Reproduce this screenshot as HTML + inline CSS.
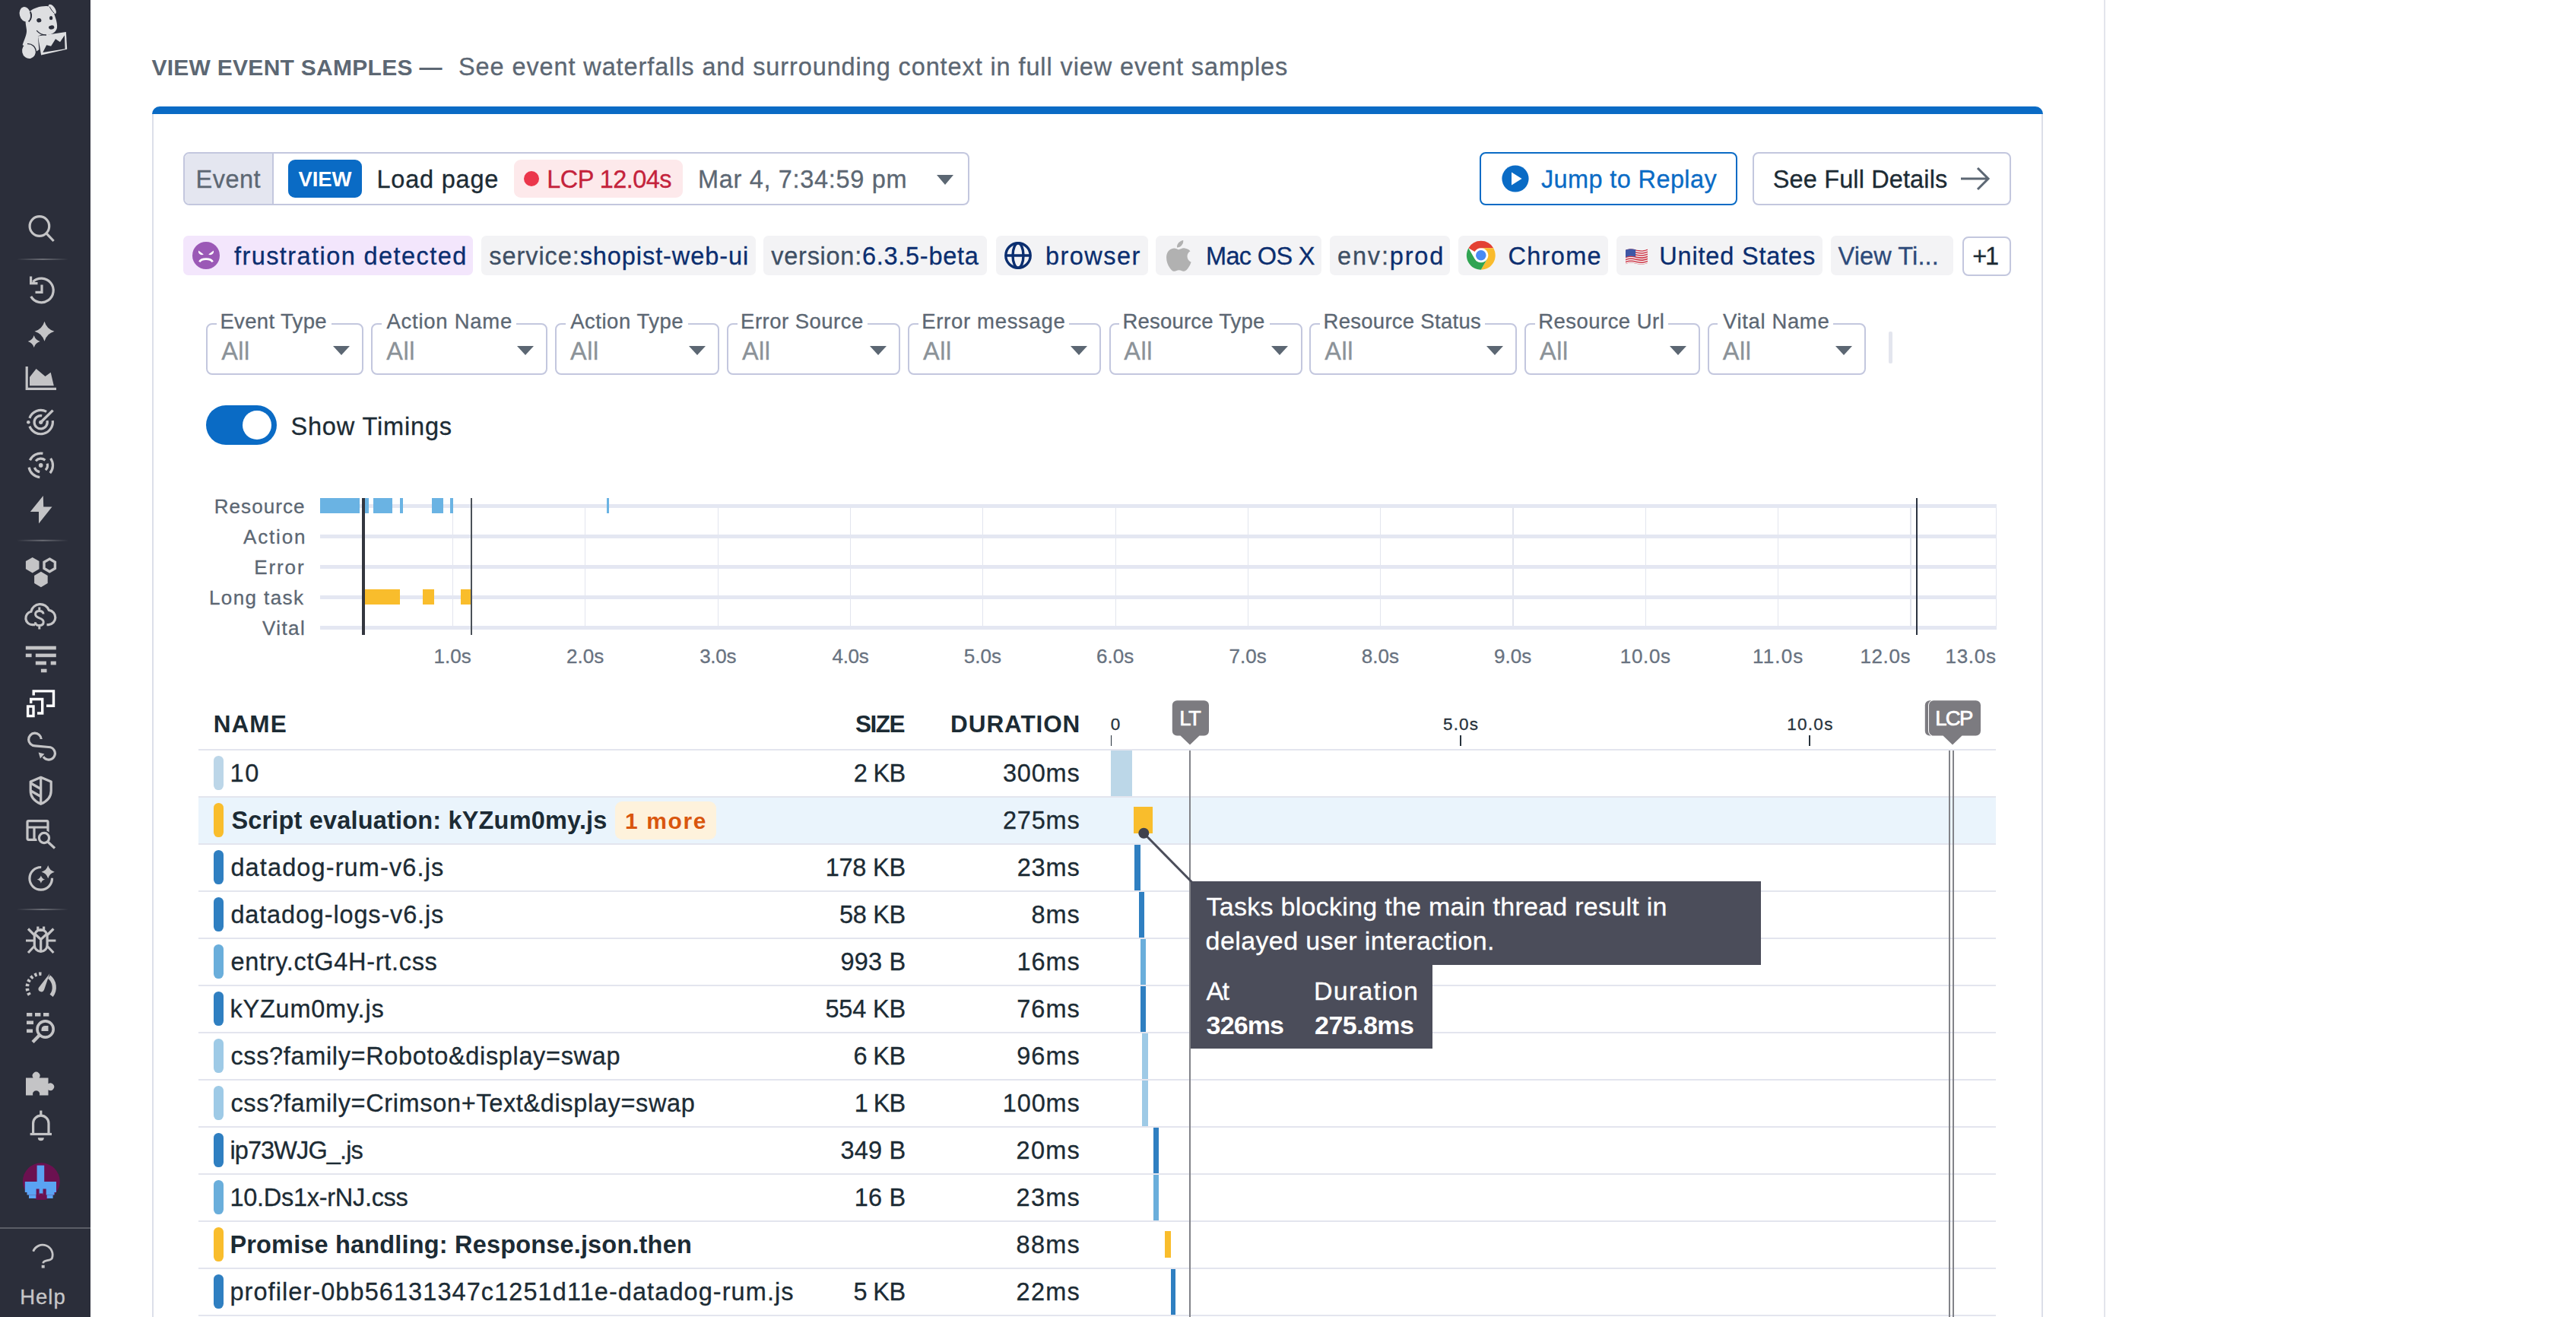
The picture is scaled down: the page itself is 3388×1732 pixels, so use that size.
<!DOCTYPE html><html lang="en"><head><meta charset="utf-8"><title>View Event Samples</title><style>*{box-sizing:border-box;margin:0;padding:0}
html,body{width:3388px;height:1732px;overflow:hidden;background:#fff}
body{font-family:"Liberation Sans",sans-serif;font-size:32.5px;color:#1c2b34;position:relative;letter-spacing:.9px}
.abs,.sb,.sb *,.card,.t,.box,.tag,.flt,.row,.row>*,.ln{position:absolute}
.t{white-space:nowrap;line-height:1;-webkit-text-stroke:.3px currentColor}
i{display:block;font-style:normal}
/* sidebar */
.sb{left:0;top:0;width:119px;height:1732px;background:#2b2e3a}
.sb svg{left:33px;width:42px;height:42px;overflow:visible}
.sb .dv{left:22px;width:66px;height:2px;background:linear-gradient(90deg,rgba(120,122,130,0),rgba(120,122,130,.9) 50%,rgba(120,122,130,0))}
.sb .help{left:0;width:120px;text-align:center;color:#c9c9cc;font-size:29px;letter-spacing:.3px;top:1690px;line-height:1}
/* card */
.vline{position:absolute;left:2767px;top:0;width:2px;height:1732px;background:#e3e5ec}
.card{left:199.7px;top:140px;width:2487.3px;height:1700px;border:2.5px solid #dcdfe9;border-top:none;border-radius:10px 10px 0 0}
.bluebar{position:absolute;left:199.7px;top:140px;width:2487.3px;height:10px;background:#0a6bc5;border-radius:10px 10px 0 0}
.box{border:2.5px solid #c3c7de;border-radius:8px;background:#fff}
.tag{top:310.4px;height:52px;border-radius:6.5px;background:#f3f3f5;color:#0c2d6b;line-height:52px;white-space:nowrap;padding-left:10px}
.tag .k{color:#3f4f63}
.flt{top:425px;height:67.5px;border:2.5px solid #c3c7de;border-radius:8px}
.flt .gap{position:absolute;left:11.5px;top:-3px;height:4px;background:#fff}
.flt .c{position:absolute;right:16.2px;top:27.8px;width:0;height:0;border-left:11.2px solid transparent;border-right:11.2px solid transparent;border-top:12.2px solid #5c6773}
/* overview chart */
.ol{right:2988px;font-size:27.5px;color:#5f6973;letter-spacing:.5px}
.trk{position:absolute;left:421.3px;width:2204.5px;height:5px;background:#e4e7f2}
.gl{position:absolute;top:665px;width:1.3px;height:160px;background:#e2e5ee}
.ax{font-size:25px;color:#6b7480;letter-spacing:.5px;transform:translateX(-50%)}
.rb{position:absolute;top:655px;height:20px;background:#6ab3e3}
.yb{position:absolute;top:775px;height:20px;background:#f9bd2c}
/* table */
.th{font-weight:700;font-size:30px;color:#1c2b34;letter-spacing:.6px}
.ln{left:261.3px;width:2363.7px;height:2.5px;background:#e3e5ee}
.pill{position:absolute;left:281.1px;width:12.8px;height:44.4px;border-radius:6.4px}
.tk{font-size:25px;color:#2b3540;letter-spacing:.3px;transform:translateX(-50%)}
</style></head><body>
<div class="sb"><svg width="119" height="1732" viewBox="0 0 119 1732" style="position:absolute;left:0;top:0;width:119px;height:1732px" fill="none" stroke="#c4c4c6" stroke-width="3.2">
<g stroke="none" fill="#dedfe1"><ellipse cx="33" cy="18.8" rx="7.2" ry="9.9" transform="rotate(-14 33 18.8)"/><ellipse cx="68.8" cy="12" rx="3.5" ry="7.3" transform="rotate(-36 68.8 12)"/><path d="M39.5 14.8C44 10.5 54 7.5 62 8C67 9 70.5 15 73.1 23.7C74.5 28 75.5 33 75 36.5C74.5 40 71 43.5 68.1 44.4C63 46.8 57 46 55.3 45.2L49.9 47.4L51.3 65.2L47.4 68.1L29.6 59.2C32 52 35.5 45 35 39.5C34.5 35 33.6 32 33.6 28.6Z"/><ellipse cx="38" cy="67.1" rx="8.9" ry="10" transform="rotate(-12 38 67.1)"/><path d="M49.9 47.4L86.9 42L88.2 64.7L54.1 72.6Z"/></g>
<g stroke="none" fill="#2b2e3a"><ellipse cx="51.3" cy="26.7" rx="3.1" ry="2.7" transform="rotate(-15 51.3 26.7)"/><ellipse cx="67.1" cy="23.7" rx="2.2" ry="2.6"/><ellipse cx="67.7" cy="36" rx="3.7" ry="2.6" transform="rotate(-8 67.7 36)"/><path d="M56.3 69.1L61.2 59.2L67.1 60.7L73 51.3L79 55.3L84.9 46.4L85.6 64.2Z"/></g>
<path d="M48.2 40.2C51 43.6 56 46.2 61 46" stroke="#2b2e3a" stroke-width="1.3"/>
<path d="M39.9 15.5C42 20 41.3 25.5 37.6 28.6" stroke="#2b2e3a" stroke-width="2"/>
<path d="M65.2 8.6C66.5 11.5 68.5 14.5 71.5 17.5" stroke="#2b2e3a" stroke-width="1"/>
<path d="M36 57.6C42 57.3 47 61 47.6 69" stroke="#2b2e3a" stroke-width="1.4"/>
<circle cx="51.9" cy="297.5" r="12.8"/><path d="M61.2 307.2L70.6 317"/>
<path d="M43.2 370.8A15.8 15.8 0 1 1 40.7 389.9"/><path d="M40.6 363.5V372.6H49.5"/><path d="M55 374.5V384.3H46.5"/>
<path d="M58.5 422.8Q61.4 432.9 71.5 435.8Q61.4 438.7 58.5 448.8Q55.6 438.7 45.5 435.8Q55.6 432.9 58.5 422.8Z" fill="#c4c4c6" stroke="none"/><path d="M44.7 441.1Q46.5 447.3 52.7 449.1Q46.5 450.9 44.7 457.1Q42.9 450.9 36.7 449.1Q42.9 447.3 44.7 441.1Z" fill="#c4c4c6" stroke="none"/>
<path d="M35.2 482V511.3H74"/><path d="M39 507.2V496L47.6 485L59.5 494.9L66.7 489.7L70.8 507.2Z" fill="#c4c4c6" stroke="none"/>
<path d="M38.9 549.9A15.8 15.8 0 0 1 61.1 541.3"/><path d="M69.3 553.1A15.8 15.8 0 0 1 38.9 560.7"/><circle cx="37.3" cy="555.3" r="2.3" fill="#c4c4c6" stroke="none"/>
<path d="M62.0 553.1A8.6 8.6 0 1 1 55.2 546.8"/><path d="M53.7 555.3L69.6 539.6" stroke-width="3.4"/><circle cx="53.7" cy="555.3" r="2.6" fill="#c4c4c6" stroke="none"/>
<path d="M39.4 605.2A15.8 15.8 0 0 1 56.4 596.3"/><path d="M66.6 602.8A15.8 15.8 0 0 1 65.8 622.1"/><path d="M52.3 627.6A15.8 15.8 0 0 1 38.1 614.6"/>
<path d="M47.0 606.2A8.8 8.8 0 0 1 59.4 605.2"/><path d="M62.2 609.6A8.8 8.8 0 0 1 59.9 618.1"/><path d="M52.2 620.6A8.8 8.8 0 0 1 45.4 614.9"/><circle cx="53.7" cy="611.9" r="2.8" fill="#c4c4c6" stroke="none"/>
<path d="M56.8 652L39.8 672.9H51V688.5L68.5 666.5H57.2Z" fill="#c4c4c6" stroke="none" stroke-linejoin="round"/>
<polygon points="42.7,733.0 51.5,738.1 51.5,748.3 42.7,753.4 33.9,748.3 33.9,738.1" fill="#c4c4c6" stroke="none"/><polygon points="53.9,751.8 62.7,756.9 62.7,767.1 53.9,772.2 45.1,767.1 45.1,756.9" fill="#c4c4c6" stroke="none"/><polygon points="65.2,735.1 72.4,739.2 72.4,747.5 65.2,751.7 58.0,747.5 58.0,739.2" stroke-width="3.4"/>
<path d="M46 821.7H43A8.8 8.8 0 0 1 40.8 804.3A12.3 12.3 0 0 1 64.3 802.4A9.7 9.7 0 0 1 63.8 821.7H61.5"/>
<path d="M57 807.6C57 804.6 54.8 803.5 51.8 803.5C48.5 803.5 46.6 805.3 46.6 807.8C46.6 810.8 49 811.8 51.8 812.8C54.8 813.8 57.2 815 57.2 818C57.2 820.8 55 822.5 51.8 822.5C48.6 822.5 46.4 821 46.4 818.2M51.8 798.4V803.5M51.8 822.5V827.6" stroke-width="3"/>
<rect x="33.8" y="849.7" width="40.0" height="4.7" fill="#c4c4c6" stroke="none"/>
<rect x="33.8" y="859.6" width="7.8" height="4.6" fill="#c4c4c6" stroke="none"/>
<rect x="46.8" y="859.6" width="27.0" height="4.6" fill="#c4c4c6" stroke="none"/>
<rect x="46.8" y="869.6" width="14.1" height="4.8" fill="#c4c4c6" stroke="none"/>
<rect x="66.7" y="869.6" width="7.1" height="4.8" fill="#c4c4c6" stroke="none"/>
<rect x="53.9" y="879.7" width="7.6" height="4.6" fill="#c4c4c6" stroke="none"/>
<g stroke="#fff" stroke-width="3.4"><path d="M44.2 914.5V908.9H70.5V928.2H61"/><path d="M40.7 925V919.5H55.7V938H49"/><rect x="36.6" y="929" width="7.4" height="12.6"/></g>
<path d="M54.2 972A8.3 8.3 0 1 0 45.9 980.8L63.9 982.5A8.3 8.3 0 1 1 57 995.2"/>
<path d="M50.6 989.6L58.4 991.6L53 997.4Z" fill="#c4c4c6" stroke="none"/>
<path d="M53.7 1022.3L67.2 1028V1040C67.2 1048.5 61.5 1054 53.7 1057.3C45.9 1054 40.2 1048.5 40.2 1040V1028Z" stroke-linejoin="round"/><path d="M53.7 1022.3V1057"/><path d="M40.5 1030L53.7 1037.5M40.5 1040L53.7 1047.5"/>
<rect x="36" y="1079.7" width="27" height="24.6" rx="1.5"/><path d="M36 1088H63M45 1088V1104"/><circle cx="58" cy="1102" r="6.6" fill="#2b2e3a" stroke="#2b2e3a" stroke-width="7"/><circle cx="58" cy="1102" r="6.6"/><path d="M62.8 1107L72 1115.5"/>
<path d="M54.2 1140.5A14.8 14.8 0 1 0 68.5 1154.8"/><path d="M63.2 1138.1Q65.1 1144.8 71.8 1146.7Q65.1 1148.6 63.2 1155.3Q61.3 1148.6 54.6 1146.7Q61.3 1144.8 63.2 1138.1Z" fill="#c4c4c6" stroke="none"/><path d="M53.9 1151.4Q55.0 1155.5 59.1 1156.6Q55.0 1157.7 53.9 1161.8Q52.8 1157.7 48.7 1156.6Q52.8 1155.5 53.9 1151.4Z" fill="#c4c4c6" stroke="none"/>
<path d="M45.3 1231A8.4 8.4 0 0 1 62.1 1231V1243A8.4 8.4 0 0 1 45.3 1243Z"/><path d="M46.2 1228.5L53.7 1235.5L61.2 1228.5M53.7 1235.5V1251"/><path d="M49.8 1218.5V1223.5H57.6V1218.5"/><path d="M45 1229.5L37 1221.5M62.4 1229.5L70.4 1221.5M45 1237H34M62.4 1237H73.4M45 1244.5L37 1253M62.4 1244.5L70.4 1253"/>
<path d="M38.9 1308.5A17.8 17.8 0 0 1 55.6 1280.8" stroke-width="4.6" stroke-dasharray="3.3 2.7"/><path d="M64.5 1284.6A17.6 17.6 0 0 1 67.6 1309.3" stroke-width="5.2"/>
<path d="M65.4 1280.3L58 1301.8A3.8 3.8 0 0 1 50.8 1299Z" fill="#c4c4c6" stroke="none"/>
<rect x="35" y="1332" width="7.4" height="4.6" fill="#c4c4c6" stroke="none"/>
<rect x="46" y="1332" width="7.4" height="4.6" fill="#c4c4c6" stroke="none"/>
<rect x="57" y="1332" width="7.4" height="4.6" fill="#c4c4c6" stroke="none"/>
<rect x="35" y="1342.5" width="9" height="4.6" fill="#c4c4c6" stroke="none"/>
<rect x="35" y="1353.5" width="8" height="4.6" fill="#c4c4c6" stroke="none"/>
<circle cx="59.6" cy="1353.5" r="10.6" stroke-width="3.6"/><path d="M51.8 1361.5L43 1370.5" stroke-width="4.4"/>
<path d="M54.5 1356V1353.5A5 5 0 0 1 59.5 1349H63.5V1356Z" fill="#c4c4c6" stroke="none"/>
<path d="M34 1417.5H43.6A4.9 4.9 0 1 1 51.6 1417.5H63.5V1425.2A4.9 4.9 0 1 1 63.5 1433.3V1440.5H52A4.7 4.7 0 1 0 43.2 1440.5H34Z" fill="#c4c4c6" stroke="none"/>
<path d="M43.6 1490.5V1477.3A10.2 10.2 0 0 1 64 1477.3V1490.5"/><path d="M39.6 1491.5H68"/><path d="M53.8 1460.5V1467"/>
<path d="M49.8 1496.3H57.8A4 4 0 0 1 49.8 1496.3Z" fill="#c4c4c6" stroke="none"/>
<circle cx="54.3" cy="1553.7" r="24.4" fill="#6b1150" stroke="none"/>
<rect x="48.6" y="1532.6" width="9.6" height="35.4" fill="#5aa3f3" stroke="none"/>
<rect x="32.8" y="1554" width="41.2" height="14.0" fill="#5aa3f3" stroke="none"/>
<rect x="35.5" y="1568" width="36.0" height="3.5" fill="#5aa3f3" stroke="none"/>
<rect x="38" y="1571.5" width="9.6" height="4.5" fill="#5aa3f3" stroke="none"/>
<rect x="61.7" y="1571.5" width="7.9" height="4.5" fill="#5aa3f3" stroke="none"/>
<rect x="50" y="1568" width="7.0" height="1.5" fill="#5aa3f3" stroke="none"/>
<rect x="47.6" y="1563.5" width="4" height="14" fill="#6b1150" stroke="none"/><rect x="56.5" y="1563.5" width="4.2" height="14" fill="#6b1150" stroke="none"/><rect x="51.6" y="1569.5" width="5" height="8" fill="#6b1150" stroke="none"/>
<rect x="22" y="340" width="68" height="2" fill="url(#dg)" stroke="none"/>
<rect x="22" y="709.8" width="68" height="2" fill="url(#dg)" stroke="none"/>
<rect x="22" y="1195" width="68" height="2" fill="url(#dg)" stroke="none"/>
<defs><linearGradient id="dg" x1="0" x2="1" y1="0" y2="0"><stop offset="0" stop-color="#6a6c74" stop-opacity="0"/><stop offset=".5" stop-color="#6a6c74" stop-opacity="1"/><stop offset="1" stop-color="#6a6c74" stop-opacity="0"/></linearGradient></defs>
<rect x="0" y="1614" width="119" height="2" fill="#5b5d66" stroke="none"/>
<path d="M43.7 1645.7A13 13 0 1 1 68.3 1655C65.5 1659 57 1656.5 56.7 1661.3" stroke-width="2.8"/><rect x="54.7" y="1663.8" width="4" height="3.8" fill="#c4c4c6" stroke="none"/>
</svg>
</div>
<div class="vline"></div>
<div class="t " style="top:1691.8px;font-size:27.5px;left:56.8px;transform:translateX(-50%);color:#c6c6c8;letter-spacing:1.012px;margin-left:-0.35px;">Help</div>
<div class="t " style="top:73.7px;font-size:30px;left:199.4px;color:#5c6773;font-weight:700;-webkit-text-stroke:0;letter-spacing:0.278px;margin-left:0.00px;">VIEW EVENT SAMPLES —</div>
<div class="t " style="top:71.9px;font-size:32.5px;left:604px;color:#5c6773;letter-spacing:0.890px;margin-left:-1.00px;">See event waterfalls and surrounding context in full view event samples</div>
<div class="card"></div><div class="bluebar"></div>
<div class="box abs" style="left:241px;top:200px;width:1034px;height:70px;overflow:hidden"><i class="abs" style="left:0;top:0;width:117.2px;height:70px;background:#e4e6f0;border-right:2.5px solid #c3c7de"></i></div>
<div class="t " style="top:219.6px;font-size:32.5px;left:259.5px;color:#5c6773;letter-spacing:0.481px;margin-left:-2.00px;">Event</div>
<div class="abs" style="left:379px;top:210px;width:97px;height:50px;border-radius:9px;background:#0a6bc5"></div>
<div class="t " style="top:222.0px;font-size:27.5px;left:392.5px;color:#fff;font-weight:700;-webkit-text-stroke:0;letter-spacing:-0.108px;margin-left:0.00px;">VIEW</div>
<div class="t " style="top:219.6px;font-size:32.5px;left:497.5px;color:#1c2b34;letter-spacing:0.774px;margin-left:-2.00px;">Load page</div>
<div class="abs" style="left:676px;top:210px;width:222px;height:50px;border-radius:9px;background:#fde9eb"></div>
<div class="abs" style="left:689px;top:225.3px;width:20px;height:20px;border-radius:50%;background:#eb364b"></div>
<div class="t " style="top:219.6px;font-size:32.5px;left:721.25px;color:#c4223b;letter-spacing:-0.565px;margin-left:-2.00px;">LCP 12.04s</div>
<div class="t " style="top:219.6px;font-size:32.5px;left:920px;color:#5c6773;letter-spacing:0.677px;margin-left:-2.00px;">Mar 4, 7:34:59 pm</div>
<div class="abs" style="left:1232px;top:229.5px;width:0;height:0;border-left:11.5px solid transparent;border-right:11.5px solid transparent;border-top:13px solid #5c6773"></div>
<div class="box abs" style="left:1946px;top:200px;width:339px;height:70px;border-color:#0a6bc5"></div>
<svg class="abs" style="left:1975px;top:217px" width="36" height="36" viewBox="0 0 36 36"><circle cx="18" cy="18" r="17.6" fill="#0a6bc5"/><path d="M13 9.5L26.5 18L13 26.5Z" fill="#fff"/></svg>
<div class="t " style="top:220.2px;font-size:32.5px;left:2026.9px;color:#0a6bc5;letter-spacing:0.381px;margin-left:0.00px;">Jump to Replay</div>
<div class="box abs" style="left:2305px;top:200px;width:340px;height:70px"></div>
<div class="t " style="top:220.2px;font-size:32.5px;left:2332.8px;color:#1c2b34;letter-spacing:0.124px;margin-left:-1.00px;">See Full Details</div>
<svg class="abs" style="left:2578px;top:218px" width="40" height="34" viewBox="0 0 40 34" fill="none" stroke="#5c6773" stroke-width="3"><path d="M1 17H37M23 3L37 17L23 31"/></svg>
<div class="tag" style="left:241.25px;width:381.2px;background:#f3e6fc"></div>
<svg class="abs" style="left:253px;top:317.8px" width="36" height="36" viewBox="0 0 36 36"><circle cx="18" cy="18" r="18" fill="#9b59b6"/><path d="M8 11.5L14.8 16.6C13 17.7 9.5 17.4 8 14ZM28 11.5L21.2 16.6C23 17.7 26.5 17.4 28 14Z" fill="#fff"/><path d="M9.3 26.3C12 21.4 24 21.4 26.7 26.3" stroke="#fff" stroke-width="2.7" fill="none"/></svg>
<div class="t " style="top:320.7px;font-size:32.5px;left:308px;color:#0b2e6f;letter-spacing:1.424px;margin-left:0.00px;">frustration detected</div>
<div class="tag" style="left:633.25px;width:360.4px;"></div>
<div class="t " style="top:320.7px;font-size:32.5px;left:643.3px;color:#0b2e6f;letter-spacing:0.924px;margin-left:0.00px;"><span style="color:#3e4f64">service:</span>shopist-web-ui</div>
<div class="tag" style="left:1004.3px;width:294.0px;"></div>
<div class="t " style="top:320.7px;font-size:32.5px;left:1014.3px;color:#0b2e6f;letter-spacing:0.730px;margin-left:0.00px;"><span style="color:#3e4f64">version:</span>6.3.5-beta</div>
<div class="tag" style="left:1309.5px;width:200.0px;"></div>
<svg class="abs" style="left:1321px;top:318.2px" width="36" height="36" viewBox="0 0 36 36" fill="none" stroke="#0b2e6f" stroke-width="3.4"><circle cx="18" cy="18" r="16.2"/><ellipse cx="18" cy="18" rx="7" ry="16.2"/><path d="M1.8 18H34.2"/></svg>
<div class="t " style="top:320.7px;font-size:32.5px;left:1377px;color:#0b2e6f;letter-spacing:1.455px;margin-left:-2.00px;">browser</div>
<div class="tag" style="left:1520px;width:218.2px;"></div>
<svg class="abs" style="left:1533px;top:315.5px" width="34" height="41" viewBox="0 0 34 41"><path fill="#b1b1b1" d="M23.2 0C23.5 2.6 22.5 5 21 6.7C19.4 8.5 17.2 9.7 15 9.5C14.7 7 15.9 4.6 17.3 3.1C18.9 1.3 21.4 0.2 23.2 0ZM32.5 14.2C29.8 15.9 28.4 18.3 28.5 21.3C28.6 24.9 30.6 27.4 33.6 28.7C32.8 31.2 31.6 33.6 30 35.9C28.3 38.3 26.6 40.6 24 40.7C21.5 40.8 20.6 39.2 17.7 39.2C14.8 39.2 13.8 40.6 11.4 40.8C8.9 40.9 7 38.3 5.3 35.9C1.8 30.9 -0.8 21.8 2.8 15.6C4.5 12.5 7.7 10.6 11.1 10.5C13.6 10.5 15.9 12.2 17.4 12.2C18.9 12.2 21.8 10.1 24.8 10.4C26.1 10.5 29.7 10.9 32.5 14.2Z"/></svg>
<div class="t " style="top:320.7px;font-size:32.5px;left:1588px;color:#0b2e6f;letter-spacing:-0.666px;margin-left:-2.00px;">Mac OS X</div>
<div class="tag" style="left:1749.25px;width:158.2px;"></div>
<div class="t " style="top:320.7px;font-size:32.5px;left:1760px;color:#0b2e6f;letter-spacing:1.835px;margin-left:-1.00px;"><span style="color:#3e4f64">env:</span>prod</div>
<div class="tag" style="left:1918.3px;width:197.1px;"></div>
<svg class="abs" style="left:1928.1px;top:316px" width="39.6" height="39.6" viewBox="0 0 48 48"><circle cx="24" cy="24" r="23" fill="#fff"/><path d="M24 1A23 23 0 0 1 43.9 12.5H24A11.5 11.5 0 0 0 14 18.3L4.1 12.5A23 23 0 0 1 24 1Z" fill="#e34133"/><path d="M43.9 12.5A23 23 0 0 1 24 47L33.96 29.75A11.5 11.5 0 0 0 24 12.5Z" fill="#f9bb2d"/><path d="M4.1 12.5L14.04 29.75A11.5 11.5 0 0 0 33.96 29.75L24 47A23 23 0 0 1 4.1 12.5Z" fill="#30a452"/><circle cx="24" cy="24" r="10.3" fill="#fff"/><circle cx="24" cy="24" r="8.2" fill="#4a8af4"/></svg>
<div class="t " style="top:320.7px;font-size:32.5px;left:1984.4px;color:#0b2e6f;letter-spacing:1.337px;margin-left:-1.00px;">Chrome</div>
<div class="tag" style="left:2126px;width:271.0px;"></div>
<svg class="abs" style="left:2137.8px;top:326.2px" width="29.5" height="22.5" viewBox="0 0 29.5 22.5"><defs><clipPath id="fc"><path d="M0 2.6C5 0.6 9 1 14.7 2.4C20 3.7 24.5 3.4 29.5 1.2V19.8C24.5 22 20 22.3 14.7 21C9 19.6 5 19.2 0 21.2Z"/></clipPath></defs><g clip-path="url(#fc)"><rect width="29.5" height="22.5" fill="#f2f2f2"/><path d="M0 2.60C5 0.60 9 1.00 14.7 2.40C20 3.70 24.5 3.40 29.5 1.20V2.80C24.5 5.00 20 5.30 14.7 4.00C9 2.60 5 2.20 0 4.20Z" fill="#d0394a"/><path d="M0 5.65C5 3.65 9 4.05 14.7 5.45C20 6.75 24.5 6.45 29.5 4.25V5.85C24.5 8.05 20 8.35 14.7 7.05C9 5.65 5 5.25 0 7.25Z" fill="#d0394a"/><path d="M0 8.70C5 6.70 9 7.10 14.7 8.50C20 9.80 24.5 9.50 29.5 7.30V8.90C24.5 11.10 20 11.40 14.7 10.10C9 8.70 5 8.30 0 10.30Z" fill="#d0394a"/><path d="M0 11.75C5 9.75 9 10.15 14.7 11.55C20 12.85 24.5 12.55 29.5 10.35V11.95C24.5 14.15 20 14.45 14.7 13.15C9 11.75 5 11.35 0 13.35Z" fill="#d0394a"/><path d="M0 14.80C5 12.80 9 13.20 14.7 14.60C20 15.90 24.5 15.60 29.5 13.40V15.00C24.5 17.20 20 17.50 14.7 16.20C9 14.80 5 14.40 0 16.40Z" fill="#d0394a"/><path d="M0 17.85C5 15.85 9 16.25 14.7 17.65C20 18.95 24.5 18.65 29.5 16.45V18.05C24.5 20.25 20 20.55 14.7 19.25C9 17.85 5 17.45 0 19.45Z" fill="#d0394a"/><path d="M0 20.90C5 18.90 9 19.30 14.7 20.70C20 22.00 24.5 21.70 29.5 19.50V21.10C24.5 23.30 20 23.60 14.7 22.30C9 20.90 5 20.50 0 22.50Z" fill="#d0394a"/><path d="M0 2.6C5 0.6 9 1 13.2 2V11.6C9 10.6 5 10.4 0 12.4Z" fill="#3f57a5"/></g></svg>
<div class="t " style="top:320.7px;font-size:32.5px;left:2184.3px;color:#0b2e6f;letter-spacing:0.820px;margin-left:-2.00px;">United States</div>
<div class="tag" style="left:2408px;width:161.2px;"></div>
<div class="t " style="top:320.7px;font-size:32.5px;left:2417.5px;color:#2d4a7a;letter-spacing:0.110px;margin-left:0.00px;">View Ti...</div>
<div class="box abs" style="left:2580.5px;top:310.5px;width:64px;height:52px"></div>
<div class="t " style="top:320.7px;font-size:32.5px;left:2611.6px;transform:translateX(-50%);color:#1c2b34;letter-spacing:-2.179px;margin-left:-1.05px;">+1</div>
<div class="flt" style="left:271.3px;width:206.9px"><i class="gap" style="width:150.9px"></i><i class="c"></i></div>
<div class="t " style="top:409.1px;font-size:27.5px;left:291.40000000000003px;color:#5c6773;letter-spacing:0.346px;margin-left:-2.00px;">Event Type</div>
<div class="t " style="top:446.0px;font-size:32.5px;left:291.20000000000005px;color:#8b9298;letter-spacing:0.501px;margin-left:0.00px;">All</div>
<div class="flt" style="left:488.4px;width:232.0px"><i class="gap" style="width:176.9px"></i><i class="c"></i></div>
<div class="t " style="top:409.1px;font-size:27.5px;left:508.5px;color:#5c6773;letter-spacing:0.727px;margin-left:0.00px;">Action Name</div>
<div class="t " style="top:446.0px;font-size:32.5px;left:508.3px;color:#8b9298;letter-spacing:0.501px;margin-left:0.00px;">All</div>
<div class="flt" style="left:730.1px;width:216.3px"><i class="gap" style="width:161.1px"></i><i class="c"></i></div>
<div class="t " style="top:409.1px;font-size:27.5px;left:750.1999999999999px;color:#5c6773;letter-spacing:0.520px;margin-left:0.00px;">Action Type</div>
<div class="t " style="top:446.0px;font-size:32.5px;left:750.0px;color:#8b9298;letter-spacing:0.501px;margin-left:0.00px;">All</div>
<div class="flt" style="left:956.0px;width:228.4px"><i class="gap" style="width:171.4px"></i><i class="c"></i></div>
<div class="t " style="top:409.1px;font-size:27.5px;left:976.0999999999999px;color:#5c6773;letter-spacing:0.483px;margin-left:-2.00px;">Error Source</div>
<div class="t " style="top:446.0px;font-size:32.5px;left:975.9px;color:#8b9298;letter-spacing:0.501px;margin-left:0.00px;">All</div>
<div class="flt" style="left:1194.1px;width:254.0px"><i class="gap" style="width:198.8px"></i><i class="c"></i></div>
<div class="t " style="top:409.1px;font-size:27.5px;left:1214.2px;color:#5c6773;letter-spacing:0.688px;margin-left:-2.00px;">Error message</div>
<div class="t " style="top:446.0px;font-size:32.5px;left:1214.0px;color:#8b9298;letter-spacing:0.501px;margin-left:0.00px;">All</div>
<div class="flt" style="left:1458.5px;width:254.0px"><i class="gap" style="width:197.5px"></i><i class="c"></i></div>
<div class="t " style="top:409.1px;font-size:27.5px;left:1478.55px;color:#5c6773;letter-spacing:0.195px;margin-left:-2.00px;">Resource Type</div>
<div class="t " style="top:446.0px;font-size:32.5px;left:1478.35px;color:#8b9298;letter-spacing:0.501px;margin-left:0.00px;">All</div>
<div class="flt" style="left:1722.4px;width:273.0px"><i class="gap" style="width:217.0px"></i><i class="c"></i></div>
<div class="t " style="top:409.1px;font-size:27.5px;left:1742.5px;color:#5c6773;letter-spacing:0.282px;margin-left:-2.00px;">Resource Status</div>
<div class="t " style="top:446.0px;font-size:32.5px;left:1742.3px;color:#8b9298;letter-spacing:0.501px;margin-left:0.00px;">All</div>
<div class="flt" style="left:2005.1px;width:231.2px"><i class="gap" style="width:175.0px"></i><i class="c"></i></div>
<div class="t " style="top:409.1px;font-size:27.5px;left:2025.2px;color:#5c6773;letter-spacing:0.468px;margin-left:-2.00px;">Resource Url</div>
<div class="t " style="top:446.0px;font-size:32.5px;left:2025.0px;color:#8b9298;letter-spacing:0.501px;margin-left:0.00px;">All</div>
<div class="flt" style="left:2245.9px;width:208.3px"><i class="gap" style="width:151.9px"></i><i class="c"></i></div>
<div class="t " style="top:409.1px;font-size:27.5px;left:2266.0px;color:#5c6773;letter-spacing:0.633px;margin-left:0.00px;">Vital Name</div>
<div class="t " style="top:446.0px;font-size:32.5px;left:2265.7999999999997px;color:#8b9298;letter-spacing:0.501px;margin-left:0.00px;">All</div>
<div class="abs" style="left:2484px;top:435.5px;width:4.5px;height:42px;background:#e3e5ee;border-radius:2px"></div>
<div class="abs" style="left:270.8px;top:533px;width:93px;height:52px;border-radius:26px;background:#0a6bc5"><i class="abs" style="right:7.3px;top:6.7px;width:38px;height:38.6px;border-radius:50%;background:#fff"></i></div>
<div class="t " style="top:545.0px;font-size:32.5px;left:383.4px;color:#1c2b34;letter-spacing:0.851px;margin-left:-1.00px;">Show Timings</div>
<div class="t " style="top:652.7px;font-size:26px;right:2988px;color:#5c6773;letter-spacing:1.062px;margin-right:-1.52px;">Resource</div>
<div class="t " style="top:692.5px;font-size:26px;right:2988px;color:#5c6773;letter-spacing:1.840px;margin-right:-3.30px;">Action</div>
<div class="t " style="top:732.5px;font-size:26px;right:2988px;color:#5c6773;letter-spacing:1.908px;margin-right:-1.57px;">Error</div>
<div class="t " style="top:772.5px;font-size:26px;right:2988px;color:#5c6773;letter-spacing:1.407px;margin-right:-0.41px;">Long task</div>
<div class="t " style="top:812.5px;font-size:26px;right:2988px;color:#5c6773;letter-spacing:1.417px;margin-right:-2.19px;">Vital</div>
<i class="gl" style="left:595.0px"></i>
<i class="gl" style="left:769.2px"></i>
<i class="gl" style="left:943.6px"></i>
<i class="gl" style="left:1117.8px"></i>
<i class="gl" style="left:1292.2px"></i>
<i class="gl" style="left:1466.5px"></i>
<i class="gl" style="left:1640.8px"></i>
<i class="gl" style="left:1815.1px"></i>
<i class="gl" style="left:1989.3px"></i>
<i class="gl" style="left:2163.7px"></i>
<i class="gl" style="left:2338.0px"></i>
<i class="gl" style="left:2512.3px"></i>
<i class="gl" style="left:2624.5px"></i>
<i class="trk" style="top:662.5px"></i>
<i class="trk" style="top:702.5px"></i>
<i class="trk" style="top:742.5px"></i>
<i class="trk" style="top:782.5px"></i>
<i class="trk" style="top:822.5px"></i>
<i class="rb" style="left:421.25px;width:51.75px"></i>
<i class="rb" style="left:480px;width:4.50px"></i>
<i class="rb" style="left:491.25px;width:24.50px"></i>
<i class="rb" style="left:525.5px;width:4.50px"></i>
<i class="rb" style="left:568px;width:14.50px"></i>
<i class="rb" style="left:592px;width:3.75px"></i>
<i class="rb" style="left:798.25px;width:2.25px"></i>
<i class="yb" style="left:480px;width:45.75px"></i>
<i class="yb" style="left:556px;width:15.25px"></i>
<i class="yb" style="left:606px;width:13.25px"></i>
<i class="abs" style="left:475.5px;top:655px;width:4.6px;height:180px;background:#33363f"></i>
<i class="abs" style="left:619.2px;top:655px;width:1.8px;height:180px;background:#4a5158"></i>
<i class="abs" style="left:2520.2px;top:655px;width:2.2px;height:180px;background:#2b3340"></i>
<div class="t " style="top:850.1px;font-size:26px;left:595.7px;transform:translateX(-50%);color:#687280;letter-spacing:0.035px;margin-left:-0.48px;">1.0s</div>
<div class="t " style="top:850.1px;font-size:26px;left:770.0px;transform:translateX(-50%);color:#687280;letter-spacing:0.035px;margin-left:-0.48px;">2.0s</div>
<div class="t " style="top:850.1px;font-size:26px;left:944.3000000000001px;transform:translateX(-50%);color:#687280;letter-spacing:-0.298px;margin-left:-0.15px;">3.0s</div>
<div class="t " style="top:850.1px;font-size:26px;left:1118.6px;transform:translateX(-50%);color:#687280;letter-spacing:-0.298px;margin-left:-0.15px;">4.0s</div>
<div class="t " style="top:850.1px;font-size:26px;left:1292.9px;transform:translateX(-50%);color:#687280;letter-spacing:0.035px;margin-left:-0.48px;">5.0s</div>
<div class="t " style="top:850.1px;font-size:26px;left:1467.2000000000003px;transform:translateX(-50%);color:#687280;letter-spacing:0.035px;margin-left:-0.48px;">6.0s</div>
<div class="t " style="top:850.1px;font-size:26px;left:1641.5px;transform:translateX(-50%);color:#687280;letter-spacing:0.035px;margin-left:-0.48px;">7.0s</div>
<div class="t " style="top:850.1px;font-size:26px;left:1815.8000000000002px;transform:translateX(-50%);color:#687280;letter-spacing:0.035px;margin-left:-0.48px;">8.0s</div>
<div class="t " style="top:850.1px;font-size:26px;left:1990.1px;transform:translateX(-50%);color:#687280;letter-spacing:0.035px;margin-left:-0.48px;">9.0s</div>
<div class="t " style="top:850.1px;font-size:26px;left:2164.4px;transform:translateX(-50%);color:#687280;letter-spacing:0.674px;margin-left:-0.16px;">10.0s</div>
<div class="t " style="top:850.1px;font-size:26px;left:2338.7000000000003px;transform:translateX(-50%);color:#687280;letter-spacing:1.157px;margin-left:0.08px;">11.0s</div>
<div class="t " style="top:850.1px;font-size:26px;right:875.5px;color:#687280;letter-spacing:0.599px;margin-right:-0.60px;">12.0s</div>
<div class="t " style="top:850.1px;font-size:26px;right:763px;color:#687280;letter-spacing:0.724px;margin-right:-0.72px;">13.0s</div>
<div class="t " style="top:936.6px;font-size:31.5px;left:282.7px;color:#1c2b34;font-weight:700;-webkit-text-stroke:0;letter-spacing:1.088px;margin-left:-2.00px;">NAME</div>
<div class="t " style="top:936.6px;font-size:31.5px;right:2198.5px;color:#1c2b34;font-weight:700;-webkit-text-stroke:0;letter-spacing:-1.534px;margin-right:0.52px;">SIZE</div>
<div class="t " style="top:936.6px;font-size:31.5px;right:1969.4px;color:#1c2b34;font-weight:700;-webkit-text-stroke:0;letter-spacing:0.907px;margin-right:-2.66px;">DURATION</div>
<div class="t " style="top:942.0px;font-size:22.5px;left:1460.8px;color:#27323c;letter-spacing:0px;">0</div>
<div class="t " style="top:942.0px;font-size:22.5px;left:1920.9px;transform:translateX(-50%);color:#27323c;letter-spacing:1.157px;margin-left:0.70px;">5.0s</div>
<div class="t " style="top:942.0px;font-size:22.5px;left:2380.7px;transform:translateX(-50%);color:#27323c;letter-spacing:1.302px;margin-left:0.28px;">10.0s</div>
<i class="abs" style="left:1460.6px;top:967px;width:1.8px;height:13.5px;background:#27323c"></i>
<i class="abs" style="left:1919.9px;top:967px;width:1.8px;height:13.5px;background:#27323c"></i>
<i class="abs" style="left:2379.4px;top:967px;width:1.8px;height:13.5px;background:#27323c"></i>
<i class="ln" style="top:984.75px"></i>
<i class="pill" style="top:994.2px;background:#bcd6e8"></i>
<div class="t " style="top:1001.3px;font-size:32.5px;left:304.4px;color:#1c2b34;letter-spacing:1.725px;margin-left:-2.00px;">10</div>
<div class="t " style="top:1001.3px;font-size:32.5px;right:2198.5px;color:#1c2b34;letter-spacing:-0.661px;margin-right:-1.02px;">2 KB</div>
<div class="t " style="top:1001.3px;font-size:32.5px;right:1968.5px;color:#1c2b34;letter-spacing:0.801px;margin-right:-1.05px;">300ms</div>
<i class="abs" style="left:1461.25px;top:987.2px;width:27.50px;height:60.4px;background:#bcd7e8"></i>
<i class="abs" style="left:261.3px;top:1049.2px;width:2363.7px;height:60.8px;background:#eaf4fc"></i>
<i class="ln" style="top:1046.75px"></i>
<i class="pill" style="top:1056.2px;background:#f9bd2c"></i>
<div class="t " style="top:1063.3px;font-size:32.5px;left:304.4px;color:#1c2b34;font-weight:700;-webkit-text-stroke:0;letter-spacing:0.177px;margin-left:0.00px;">Script evaluation: kYZum0my.js</div>
<div class="t " style="top:1063.3px;font-size:32.5px;right:1968.5px;color:#1c2b34;letter-spacing:0.801px;margin-right:-1.05px;">275ms</div>
<i class="abs" style="left:1491.25px;top:1061.2px;width:25.00px;height:34.5px;background:#f9bd2c"></i>
<i class="ln" style="top:1108.75px"></i>
<i class="pill" style="top:1118.2px;background:#2f7fc1"></i>
<div class="t " style="top:1125.3px;font-size:32.5px;left:304.4px;color:#1c2b34;letter-spacing:1.121px;margin-left:-1.00px;">datadog-rum-v6.js</div>
<div class="t " style="top:1125.3px;font-size:32.5px;right:2198.5px;color:#1c2b34;letter-spacing:-0.226px;margin-right:-1.45px;">178 KB</div>
<div class="t " style="top:1125.3px;font-size:32.5px;right:1968.5px;color:#1c2b34;letter-spacing:0.859px;margin-right:-1.11px;">23ms</div>
<i class="abs" style="left:1492.4px;top:1111.2px;width:7.40px;height:60.4px;background:#2f7fc1"></i>
<i class="ln" style="top:1170.75px"></i>
<i class="pill" style="top:1180.2px;background:#2f7fc1"></i>
<div class="t " style="top:1187.3px;font-size:32.5px;left:304.4px;color:#1c2b34;letter-spacing:0.840px;margin-left:-1.00px;">datadog-logs-v6.js</div>
<div class="t " style="top:1187.3px;font-size:32.5px;right:2198.5px;color:#1c2b34;letter-spacing:-0.339px;margin-right:-1.34px;">58 KB</div>
<div class="t " style="top:1187.3px;font-size:32.5px;right:1968.5px;color:#1c2b34;letter-spacing:0.926px;margin-right:-1.18px;">8ms</div>
<i class="abs" style="left:1498.2px;top:1173.2px;width:6.60px;height:60.4px;background:#2f7fc1"></i>
<i class="ln" style="top:1232.75px"></i>
<i class="pill" style="top:1242.2px;background:#6aaedb"></i>
<div class="t " style="top:1249.3px;font-size:32.5px;left:304.4px;color:#1c2b34;letter-spacing:0.707px;margin-left:-1.00px;">entry.ctG4H-rt.css</div>
<div class="t " style="top:1249.3px;font-size:32.5px;right:2198.5px;color:#1c2b34;letter-spacing:0.211px;margin-right:-1.89px;">993 B</div>
<div class="t " style="top:1249.3px;font-size:32.5px;right:1968.5px;color:#1c2b34;letter-spacing:0.892px;margin-right:-1.14px;">16ms</div>
<i class="abs" style="left:1499.6px;top:1235.2px;width:7.80px;height:60.4px;background:#6aaedb"></i>
<i class="ln" style="top:1294.75px"></i>
<i class="pill" style="top:1304.2px;background:#2f7fc1"></i>
<div class="t " style="top:1311.3px;font-size:32.5px;left:304.4px;color:#1c2b34;letter-spacing:0.784px;margin-left:-2.00px;">kYZum0my.js</div>
<div class="t " style="top:1311.3px;font-size:32.5px;right:2198.5px;color:#1c2b34;letter-spacing:-0.186px;margin-right:-1.49px;">554 KB</div>
<div class="t " style="top:1311.3px;font-size:32.5px;right:1968.5px;color:#1c2b34;letter-spacing:0.992px;margin-right:-1.24px;">76ms</div>
<i class="abs" style="left:1500.4px;top:1297.2px;width:7.00px;height:60.4px;background:#2f7fc1"></i>
<i class="ln" style="top:1356.75px"></i>
<i class="pill" style="top:1366.2px;background:#9ecae6"></i>
<div class="t " style="top:1373.3px;font-size:32.5px;left:304.4px;color:#1c2b34;letter-spacing:0.652px;margin-left:-1.00px;">css?family=Roboto&amp;display=swap</div>
<div class="t " style="top:1373.3px;font-size:32.5px;right:2198.5px;color:#1c2b34;letter-spacing:-0.561px;margin-right:-1.12px;">6 KB</div>
<div class="t " style="top:1373.3px;font-size:32.5px;right:1968.5px;color:#1c2b34;letter-spacing:0.992px;margin-right:-1.24px;">96ms</div>
<i class="abs" style="left:1502.4px;top:1359.2px;width:8.10px;height:60.4px;background:#9ecae6"></i>
<i class="ln" style="top:1418.75px"></i>
<i class="pill" style="top:1428.2px;background:#9ecae6"></i>
<div class="t " style="top:1435.3px;font-size:32.5px;left:304.4px;color:#1c2b34;letter-spacing:0.644px;margin-left:-1.00px;">css?family=Crimson+Text&amp;display=swap</div>
<div class="t " style="top:1435.3px;font-size:32.5px;right:2198.5px;color:#1c2b34;letter-spacing:-0.994px;margin-right:-0.68px;">1 KB</div>
<div class="t " style="top:1435.3px;font-size:32.5px;right:1968.5px;color:#1c2b34;letter-spacing:0.851px;margin-right:-1.10px;">100ms</div>
<i class="abs" style="left:1502.4px;top:1421.2px;width:8.10px;height:60.4px;background:#9ecae6"></i>
<i class="ln" style="top:1480.75px"></i>
<i class="pill" style="top:1490.2px;background:#2f7fc1"></i>
<div class="t " style="top:1497.3px;font-size:32.5px;left:304.4px;color:#1c2b34;letter-spacing:-0.887px;margin-left:-2.00px;">ip73WJG_.js</div>
<div class="t " style="top:1497.3px;font-size:32.5px;right:2198.5px;color:#1c2b34;letter-spacing:0.161px;margin-right:-1.84px;">349 B</div>
<div class="t " style="top:1497.3px;font-size:32.5px;right:1968.5px;color:#1c2b34;letter-spacing:1.226px;margin-right:-1.48px;">20ms</div>
<i class="abs" style="left:1516.5px;top:1483.2px;width:7.10px;height:60.4px;background:#2f7fc1"></i>
<i class="ln" style="top:1542.75px"></i>
<i class="pill" style="top:1552.2px;background:#6aaedb"></i>
<div class="t " style="top:1559.3px;font-size:32.5px;left:304.4px;color:#1c2b34;letter-spacing:-0.280px;margin-left:-2.00px;">10.Ds1x-rNJ.css</div>
<div class="t " style="top:1559.3px;font-size:32.5px;right:2198.5px;color:#1c2b34;letter-spacing:0.207px;margin-right:-1.88px;">16 B</div>
<div class="t " style="top:1559.3px;font-size:32.5px;right:1968.5px;color:#1c2b34;letter-spacing:1.226px;margin-right:-1.48px;">23ms</div>
<i class="abs" style="left:1516.5px;top:1545.2px;width:7.10px;height:60.4px;background:#6aaedb"></i>
<i class="ln" style="top:1604.75px"></i>
<i class="pill" style="top:1614.2px;background:#f9bd2c"></i>
<div class="t " style="top:1621.3px;font-size:32.5px;left:304.4px;color:#1c2b34;font-weight:700;-webkit-text-stroke:0;letter-spacing:0.172px;margin-left:-2.00px;">Promise handling: Response.json.then</div>
<div class="t " style="top:1621.3px;font-size:32.5px;right:1968.5px;color:#1c2b34;letter-spacing:1.226px;margin-right:-1.48px;">88ms</div>
<i class="abs" style="left:1532px;top:1619.2px;width:7.70px;height:34.5px;background:#f9bd2c"></i>
<i class="ln" style="top:1666.75px"></i>
<i class="pill" style="top:1676.2px;background:#2f7fc1"></i>
<div class="t " style="top:1683.3px;font-size:32.5px;left:304.4px;color:#1c2b34;letter-spacing:1.073px;margin-left:-2.00px;">profiler-0bb56131347c1251d11e-datadog-rum.js</div>
<div class="t " style="top:1683.3px;font-size:32.5px;right:2198.5px;color:#1c2b34;letter-spacing:-0.561px;margin-right:-1.12px;">5 KB</div>
<div class="t " style="top:1683.3px;font-size:32.5px;right:1968.5px;color:#1c2b34;letter-spacing:1.226px;margin-right:-1.48px;">22ms</div>
<i class="abs" style="left:1539.7px;top:1669.2px;width:6.00px;height:60.4px;background:#2f7fc1"></i>
<i class="ln" style="top:1728.75px"></i>
<i class="abs" style="left:809px;top:1054.3px;width:132.8px;height:49.7px;border-radius:9px;background:#fef2dc"></i>
<div class="t " style="top:1064.5px;font-size:30px;left:823px;color:#d9560d;font-weight:700;-webkit-text-stroke:0;letter-spacing:1.601px;margin-left:-1.00px;">1 more</div>
<svg class="abs" style="left:1535px;top:915px" width="70" height="70" viewBox="1535 915 70 70"><path d="M1548 921.3H1583.8A6.2 6.2 0 0 1 1590 927.5V961.3A6.2 6.2 0 0 1 1583.8 967.5H1577.5L1565 979.6L1552.5 967.5H1548A6.2 6.2 0 0 1 1541.8 961.3V927.5A6.2 6.2 0 0 1 1548 921.3Z" fill="#7c7b80"/></svg>
<div class="t " style="top:931.3px;font-size:27.5px;left:1566.6px;transform:translateX(-50%);color:#fff;letter-spacing:-1.503px;margin-left:-1.85px;-webkit-text-stroke:.7px #fff;">LT</div>
<i class="abs" style="left:1563.5px;top:987px;width:2px;height:760px;background:#828389"></i>
<svg class="abs" style="left:2525px;top:915px" width="90" height="70" viewBox="2525 915 90 70"><rect x="2531.8" y="921.3" width="60" height="46.2" rx="6.2" fill="#7c7b80"/><path d="M2543.2 920.3H2598.8A7.2 7.2 0 0 1 2606 927.5V961.3A7.2 7.2 0 0 1 2598.8 968.5H2580.5L2568 980.6L2555.5 968.5H2543.2A7.2 7.2 0 0 1 2536 961.3V927.5A7.2 7.2 0 0 1 2543.2 920.3Z" fill="#fff"/><path d="M2543.2 921.3H2598.8A6.2 6.2 0 0 1 2605 927.5V961.3A6.2 6.2 0 0 1 2598.8 967.5H2580.5L2568 979.6L2555.5 967.5H2543.2A6.2 6.2 0 0 1 2537 961.3V927.5A6.2 6.2 0 0 1 2543.2 921.3Z" fill="#7c7b80"/></svg>
<div class="t " style="top:931.3px;font-size:27.5px;left:2570.6px;transform:translateX(-50%);color:#fff;letter-spacing:-1.777px;margin-left:-1.22px;-webkit-text-stroke:.7px #fff;">LCP</div>
<i class="abs" style="left:2563.2px;top:987px;width:2px;height:760px;background:#828389"></i>
<i class="abs" style="left:2568.4px;top:987px;width:2px;height:760px;background:#828389"></i>
<svg class="abs" style="left:1490px;top:1080px" width="100" height="90" viewBox="1490 1080 100 90"><path d="M1504.3 1095.8L1567.5 1160" stroke="#4b4d5a" stroke-width="3" fill="none"/><circle cx="1504.3" cy="1095.8" r="7" fill="#3f414c"/></svg>
<i class="abs" style="left:1565.8px;top:1159.3px;width:750px;height:109.5px;background:#4b4d5a"></i>
<i class="abs" style="left:1565.8px;top:1268px;width:318px;height:110.5px;background:#4b4d5a"></i>
<div class="t " style="top:1175.3px;font-size:34px;left:1586.6px;color:#fff;letter-spacing:0.272px;margin-left:0.00px;">Tasks blocking the main thread result in</div>
<div class="t " style="top:1219.7px;font-size:34px;left:1586.6px;color:#fff;letter-spacing:0.392px;margin-left:-1.00px;">delayed user interaction.</div>
<div class="t " style="top:1285.9px;font-size:34px;left:1586.6px;color:#fff;letter-spacing:-1.678px;margin-left:0.00px;">At</div>
<div class="t " style="top:1285.9px;font-size:34px;left:1730.1px;color:#fff;letter-spacing:1.199px;margin-left:-2.00px;">Duration</div>
<div class="t " style="top:1330.6px;font-size:34px;left:1586.6px;color:#fff;font-weight:700;-webkit-text-stroke:0;letter-spacing:-0.865px;margin-left:0.00px;">326ms</div>
<div class="t " style="top:1330.6px;font-size:34px;left:1730.1px;color:#fff;font-weight:700;-webkit-text-stroke:0;letter-spacing:-0.569px;margin-left:-1.00px;">275.8ms</div>
</body></html>
